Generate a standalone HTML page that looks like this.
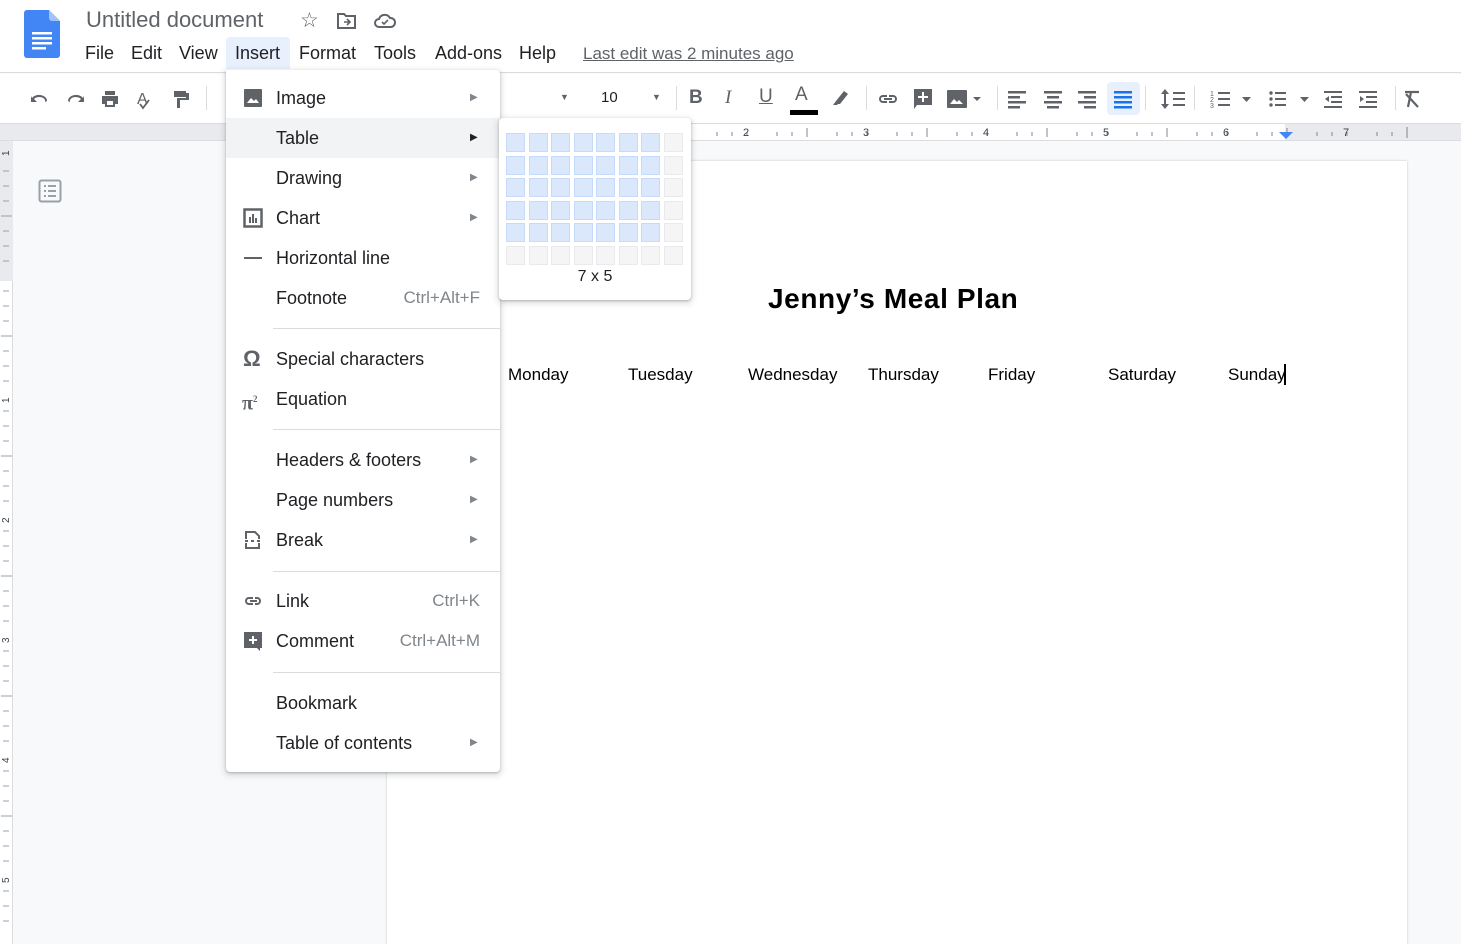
<!DOCTYPE html>
<html><head><meta charset="utf-8"><style>
*{margin:0;padding:0;box-sizing:border-box}
body{width:1461px;height:944px;overflow:hidden;background:#f8f9fa;font-family:"Liberation Sans",Arial,sans-serif;position:relative;color:#202124}
.a{position:absolute;white-space:nowrap}
.mi{position:absolute;left:0;width:274px;height:40px;font-size:18px;line-height:40px;color:#202124;white-space:nowrap}
.mi .t{position:absolute;left:50px}
.mi .k{position:absolute;right:20px;color:#80868b;font-size:17px}
.mi .ar{position:absolute;left:244px;top:0;color:#80868b;font-size:10px}
.mi .ic{position:absolute;left:17px;top:10px;width:20px;height:20px}
.sep{position:absolute;left:47px;width:227px;height:1px;background:#dadce0}
.cell{position:absolute;width:19px;height:19px;border:1px solid #c6dafc;background:#dbe7fb}
.cell.e{border-color:#e8eaed;background:#f5f5f5}
.day{position:absolute;top:365px;font-size:17px;color:#000;white-space:nowrap}
</style></head><body>
<div class="a" style="left:0;top:0;width:1461px;height:73px;background:#fff;border-bottom:1px solid #dadce0"></div>
<svg class="a" style="left:24px;top:10px" width="36" height="48" viewBox="0 0 36 48"><path d="M3 0h22l11 11v34a3 3 0 0 1-3 3H3a3 3 0 0 1-3-3V3a3 3 0 0 1 3-3z" fill="#4285f4"/><path d="M25 0l11 11H28a3 3 0 0 1-3-3z" fill="#a1c2fa"/><rect x="8" y="22" width="20" height="2.5" fill="#fff"/><rect x="8" y="27" width="20" height="2.5" fill="#fff"/><rect x="8" y="32" width="20" height="2.5" fill="#fff"/><rect x="8" y="37" width="14" height="2.5" fill="#fff"/></svg>
<div class="a" style="left:86px;top:7px;font-size:22px;color:#5f6368">Untitled document</div>
<div class="a" style="left:300px;top:8px;font-size:21px;color:#5f6368">☆</div>
<svg class="a" style="left:337px;top:12px" width="20" height="18" viewBox="0 0 20 18"><path d="M1 2h6l2 2h9v12H1z" fill="none" stroke="#5f6368" stroke-width="2"/><path d="M7 10h6M10 7l3 3-3 3" fill="none" stroke="#5f6368" stroke-width="1.6"/></svg>
<svg class="a" style="left:374px;top:12px" width="22" height="17" viewBox="0 0 22 17"><path d="M5 15a4 4 0 0 1 0-8 6 6 0 0 1 11-1 4.5 4.5 0 0 1 1 9z" fill="none" stroke="#5f6368" stroke-width="2"/><path d="M8 10l2 2 4-4" fill="none" stroke="#5f6368" stroke-width="1.6"/></svg>
<div class="a" style="left:226px;top:37px;width:64px;height:32px;background:#e8f0fe;border-radius:4px 4px 0 0"></div>
<div class="a" style="left:85px;top:43px;font-size:18px">
<span style="position:absolute;left:0">File</span><span style="position:absolute;left:46px">Edit</span><span style="position:absolute;left:94px">View</span><span style="position:absolute;left:150px">Insert</span><span style="position:absolute;left:214px">Format</span><span style="position:absolute;left:289px">Tools</span><span style="position:absolute;left:350px;white-space:nowrap">Add-ons</span><span style="position:absolute;left:434px">Help</span></div>
<div class="a" style="left:583px;top:44px;font-size:17px;color:#5f6368;text-decoration:underline">Last edit was 2 minutes ago</div>
<div class="a" style="left:0;top:74px;width:1461px;height:49px;background:#fff"></div>
<svg class="a" style="left:28px;top:88px" width="170" height="22" viewBox="0 0 170 22" fill="#5f6368">
<path d="M4 10a8 6 0 0 1 15 3l-2 1a6 4 0 0 0-11-3l3 3H3V8l1 2z"/>
<path d="M55 10a8 6 0 0 0-15 3l2 1a6 4 0 0 1 11-3l-3 3h6V8l-1 2z"/>
<path d="M77 3h10v4H77zM74 8h16v8h-3v3H77v-3h-3z"/><rect x="79" y="13" width="6" height="4" fill="#fff"/>
<text x="109" y="16" font-size="16" font-family="Liberation Sans">A</text><path d="M112 16l3 4 6-8" fill="none" stroke="#5f6368" stroke-width="1.8"/>
<path d="M146 3h12v6h-12zM158 5h3v7h-9v8h-3v-10h9z"/>
</svg>
<div class="a" style="left:206px;top:86px;width:1px;height:24px;background:#dadce0"></div>
<div class="a" style="left:560px;top:92px;font-size:9px;color:#5f6368">▼</div>
<div class="a" style="left:601px;top:89px;font-size:15px;color:#202124">10</div>
<div class="a" style="left:652px;top:92px;font-size:9px;color:#5f6368">▼</div>
<div class="a" style="left:676px;top:86px;width:1px;height:24px;background:#dadce0"></div>
<div class="a" style="left:689px;top:87px;font-size:19px;font-weight:bold;color:#5f6368">B</div>
<div class="a" style="left:725px;top:87px;font-size:19px;font-style:italic;font-family:'Liberation Serif';color:#5f6368">I</div>
<div class="a" style="left:759px;top:86px;font-size:19px;text-decoration:underline;color:#5f6368">U</div>
<div class="a" style="left:795px;top:84px;font-size:19px;color:#5f6368">A</div>
<div class="a" style="left:790px;top:110px;width:28px;height:5px;background:#000"></div>
<svg class="a" style="left:830px;top:88px" width="22" height="20" viewBox="0 0 22 20"><path d="M6 13l8-10 4 3-8 10H6z" fill="#5f6368"/><path d="M3 17l3-4 3 2-2 2z" fill="#5f6368"/></svg>
<div class="a" style="left:866px;top:86px;width:1px;height:24px;background:#dadce0"></div>
<svg class="a" style="left:876px;top:88px" width="120" height="22" viewBox="0 0 120 22" fill="#5f6368">
<path d="M7 7h4v2H7a2 2 0 0 0 0 4h4v2H7a4 4 0 0 1 0-8zM13 7h4a4 4 0 0 1 0 8h-4v-2h4a2 2 0 0 0 0-4h-4zM8 10h8v2H8z"/>
<path d="M38 1h18v16H41l-3 4z"/><rect x="46" y="4" width="2" height="10" fill="#fff"/><rect x="42" y="8" width="10" height="2" fill="#fff"/>
<rect x="71" y="2" width="20" height="18" rx="1"/><path d="M74 16l4-5 3 3 2-2 4 4z" fill="#fff"/><path d="M97 9h8l-4 4z"/>
</svg>
<div class="a" style="left:997px;top:86px;width:1px;height:24px;background:#dadce0"></div>
<div class="a" style="left:1107px;top:82px;width:33px;height:33px;background:#e8f0fe;border-radius:4px"></div>
<svg class="a" style="left:1005px;top:88px" width="420" height="22" viewBox="0 0 420 22">
<g fill="#5f6368"><path d="M3 3h18v2.5H3zM3 8h12v2.5H3zM3 13h18v2.5H3zM3 18h12v2.5H3z"/>
<path d="M39 3h18v2.5H39zM42 8h12v2.5H42zM39 13h18v2.5H39zM42 18h12v2.5H42z"/>
<path d="M73 3h18v2.5H73zM79 8h12v2.5H79zM73 13h18v2.5H73zM79 18h12v2.5H79z"/></g>
<g fill="#1a73e8"><path d="M109 3h18v2.5h-18zM109 8h18v2.5h-18zM109 13h18v2.5h-18zM109 18h18v2.5h-18z"/></g>
<g fill="#5f6368"><path d="M160 1l-4 5h3v10h-3l4 5 4-5h-3V6h3zM168 4h12v2h-12zM168 10h12v2h-12zM168 16h12v2h-12z"/>
<path d="M213 4h12v2h-12zM213 10h12v2h-12zM213 16h12v2h-12z"/><text x="205" y="8" font-size="7" font-family="Liberation Sans">1</text><text x="205" y="14" font-size="7" font-family="Liberation Sans">2</text><text x="205" y="20" font-size="7" font-family="Liberation Sans">3</text><path d="M237 9h9l-4.5 5z"/>
<circle cx="266" cy="5" r="1.7"/><circle cx="266" cy="11" r="1.7"/><circle cx="266" cy="17" r="1.7"/><path d="M270 4h11v2h-11zM270 10h11v2h-11zM270 16h11v2h-11z"/><path d="M295 9h9l-4.5 5z"/>
<path d="M319 3h18v2h-18zM326 8h11v2h-11zM326 13h11v2h-11zM319 18h18v2h-18zM324 8v6l-4-3z"/>
<path d="M354 3h18v2h-18zM361 8h11v2h-11zM361 13h11v2h-11zM354 18h18v2h-18zM355 8v6l4-3z"/></g>
<path d="M400 4h14M406 4l-3 15M401 6l12 13" stroke="#5f6368" stroke-width="2.2" fill="none"/>
</svg>
<div class="a" style="left:1145px;top:86px;width:1px;height:24px;background:#dadce0"></div>
<div class="a" style="left:1194px;top:86px;width:1px;height:24px;background:#dadce0"></div>
<div class="a" style="left:1395px;top:86px;width:1px;height:24px;background:#dadce0"></div>
<div class="a" style="left:0;top:123px;width:1461px;height:18px;background:#e8eaed;border-top:1px solid #dadce0;border-bottom:1px solid #dadce0"></div>
<div class="a" style="left:387px;top:124px;width:898px;height:16px;background:#fff"></div>
<svg class="a" style="left:387px;top:124px" width="1074" height="17">
<g stroke="#80868b" stroke-width="1">
<path d="M330 8v4M345 8v4M360 8v4M390 8v4M405 8v4M420 8v4M450 8v4M465 8v4M480 8v4M510 8v4M525 8v4M540 8v4M570 8v4M585 8v4M600 8v4M630 8v4M645 8v4M660 8v4M690 8v4M705 8v4M720 8v4M750 8v4M765 8v4M780 8v4M810 8v4M825 8v4M840 8v4M870 8v4M885 8v4M900 8v4M930 8v4M945 8v4M960 8v4M990 8v4M1005 8v4"/>
<path d="M420 4v9M540 4v9M660 4v9M780 4v9M900 4v9M1020 3v11"/></g>
<g font-size="11" fill="#3c4043" font-family="Liberation Sans"><text x="356" y="12">2</text><text x="476" y="12">3</text><text x="596" y="12">4</text><text x="716" y="12">5</text><text x="836" y="12">6</text><text x="956" y="12">7</text></g>
<path d="M892 8h14l-7 7z" fill="#4285f4"/>
</svg>
<div class="a" style="left:0;top:141px;width:13px;height:803px;background:#fff;border-right:1px solid #dadce0"></div>
<div class="a" style="left:0;top:141px;width:13px;height:140px;background:#e8eaed"></div>
<svg class="a" style="left:0;top:141px" width="13" height="803"><g stroke="#9aa0a6"><path d="M3 30h6M3 45h6M3 60h6M3 90h6M3 105h6M3 120h6M3 150h6M3 165h6M3 180h6M3 210h6M3 225h6M3 240h6M3 270h6M3 285h6M3 300h6M3 330h6M3 345h6M3 360h6M3 390h6M3 405h6M3 420h6M3 450h6M3 465h6M3 480h6M3 510h6M3 525h6M3 540h6M3 570h6M3 585h6M3 600h6M3 630h6M3 645h6M3 660h6M3 690h6M3 705h6M3 720h6M3 750h6M3 765h6M3 780h6"/><path d="M1 75h11M1 195h11M1 315h11M1 435h11M1 555h11M1 675h11"/></g>
<g font-size="10" fill="#3c4043" font-family="Liberation Sans"><text transform="translate(9,15) rotate(-90)">1</text><text transform="translate(9,262) rotate(-90)">1</text><text transform="translate(9,382) rotate(-90)">2</text><text transform="translate(9,502) rotate(-90)">3</text><text transform="translate(9,622) rotate(-90)">4</text><text transform="translate(9,742) rotate(-90)">5</text></g></svg>
<svg class="a" style="left:38px;top:179px" width="24" height="24" viewBox="0 0 24 24"><rect x="1.5" y="1.5" width="21" height="21" rx="2" fill="none" stroke="#9aa0a6" stroke-width="2"/><path d="M6 7h2M10 7h8M6 12h2M10 12h8M6 17h2M10 17h8" stroke="#9aa0a6" stroke-width="2"/></svg>
<div class="a" style="left:387px;top:161px;width:1020px;height:783px;background:#fff;box-shadow:0 0 2px rgba(60,64,67,.3)"></div>
<div class="a" style="left:768px;top:283px;font-size:28px;font-weight:bold;color:#000;letter-spacing:0.6px">Jenny’s Meal Plan</div>
<div class="day" style="left:508px">Monday</div>
<div class="day" style="left:628px">Tuesday</div>
<div class="day" style="left:748px">Wednesday</div>
<div class="day" style="left:868px">Thursday</div>
<div class="day" style="left:988px">Friday</div>
<div class="day" style="left:1108px">Saturday</div>
<div class="day" style="left:1228px">Sunday</div>
<div class="a" style="left:1284px;top:364px;width:2px;height:21px;background:#000"></div>
<div class="a" style="left:226px;top:70px;width:274px;height:702px;background:#fff;border-radius:0 4px 4px 4px;box-shadow:0 2px 6px 2px rgba(60,64,67,.15),0 1px 2px rgba(60,64,67,.3)">
<div class="mi" style="top:8px"><svg class="ic" viewBox="0 0 20 20"><rect x="1" y="1" width="18" height="18" rx="1" fill="#5f6368"/><path d="M4 15l4-5 3 3 2-2 3 4z" fill="#fff"/></svg><span class="t">Image</span><span class="ar">▶</span></div>
<div class="mi" style="top:48px;background:#f1f3f4"><span class="t">Table</span><span class="ar" style="color:#202124">▶</span></div>
<div class="mi" style="top:88px"><span class="t">Drawing</span><span class="ar">▶</span></div>
<div class="mi" style="top:128px"><svg class="ic" viewBox="0 0 20 20"><rect x="1.5" y="1.5" width="17" height="17" fill="none" stroke="#5f6368" stroke-width="2.5"/><path d="M6 9h2v6H6zM9 6h2v9H9zM12 10h2v5h-2z" fill="#5f6368"/></svg><span class="t">Chart</span><span class="ar">▶</span></div>
<div class="mi" style="top:168px"><svg class="ic" viewBox="0 0 20 20"><rect x="1" y="9" width="18" height="2" fill="#5f6368"/></svg><span class="t">Horizontal line</span></div>
<div class="mi" style="top:208px"><span class="t">Footnote</span><span class="k">Ctrl+Alt+F</span></div>
<div class="sep" style="top:258px"></div>
<div class="mi" style="top:269px"><span class="ic" style="top:0;left:17px;font-size:22px;color:#5f6368;font-weight:bold">Ω</span><span class="t">Special characters</span></div>
<div class="mi" style="top:309px"><span class="ic" style="top:0;left:16px;font-size:20px;color:#5f6368;font-weight:bold;font-family:'Liberation Serif'">π<sup style="font-size:9px">2</sup></span><span class="t">Equation</span></div>
<div class="sep" style="top:359px"></div>
<div class="mi" style="top:370px"><span class="t">Headers &amp; footers</span><span class="ar">▶</span></div>
<div class="mi" style="top:410px"><span class="t">Page numbers</span><span class="ar">▶</span></div>
<div class="mi" style="top:450px"><svg class="ic" viewBox="0 0 20 20"><path d="M3 9V2h9l4 4v3M3 13v5h13v-5" fill="none" stroke="#5f6368" stroke-width="2"/><path d="M2 11h3M8 11h3M14 11h3" stroke="#5f6368" stroke-width="2"/></svg><span class="t">Break</span><span class="ar">▶</span></div>
<div class="sep" style="top:501px"></div>
<div class="mi" style="top:511px"><svg class="ic" viewBox="0 0 20 20"><path d="M6 6h4v2H6a2 2 0 0 0 0 4h4v2H6a4 4 0 0 1 0-8zM12 6h2a4 4 0 0 1 0 8h-2v-2h2a2 2 0 0 0 0-4h-2zM7 9h7v2H7z" fill="#5f6368"/></svg><span class="t">Link</span><span class="k">Ctrl+K</span></div>
<div class="mi" style="top:551px"><svg class="ic" viewBox="0 0 20 20"><path d="M1 1h18v16h-2v3l-3-3H1z" fill="#5f6368"/><path d="M9 5h2v3h3v2h-3v3H9v-3H6V8h3z" fill="#fff"/></svg><span class="t">Comment</span><span class="k">Ctrl+Alt+M</span></div>
<div class="sep" style="top:602px"></div>
<div class="mi" style="top:613px"><span class="t">Bookmark</span></div>
<div class="mi" style="top:653px"><span class="t">Table of contents</span><span class="ar">▶</span></div>
</div>
<div class="a" style="left:499px;top:118px;width:192px;height:182px;background:#fff;border-radius:4px;box-shadow:0 2px 6px 2px rgba(60,64,67,.15),0 1px 2px rgba(60,64,67,.3)">
<div class="a" style="left:0;top:150px;width:192px;text-align:center;font-size:16px;color:#202124">7 x 5</div>
</div>
<div class="a" style="left:506px;top:133px">
<div class="cell" style="left:0;top:0"></div><div class="cell" style="left:22.5px;top:0"></div><div class="cell" style="left:45px;top:0"></div><div class="cell" style="left:67.5px;top:0"></div><div class="cell" style="left:90px;top:0"></div><div class="cell" style="left:112.5px;top:0"></div><div class="cell" style="left:135px;top:0"></div><div class="cell e" style="left:157.5px;top:0"></div>
<div class="cell" style="left:0;top:22.5px"></div><div class="cell" style="left:22.5px;top:22.5px"></div><div class="cell" style="left:45px;top:22.5px"></div><div class="cell" style="left:67.5px;top:22.5px"></div><div class="cell" style="left:90px;top:22.5px"></div><div class="cell" style="left:112.5px;top:22.5px"></div><div class="cell" style="left:135px;top:22.5px"></div><div class="cell e" style="left:157.5px;top:22.5px"></div>
<div class="cell" style="left:0;top:45px"></div><div class="cell" style="left:22.5px;top:45px"></div><div class="cell" style="left:45px;top:45px"></div><div class="cell" style="left:67.5px;top:45px"></div><div class="cell" style="left:90px;top:45px"></div><div class="cell" style="left:112.5px;top:45px"></div><div class="cell" style="left:135px;top:45px"></div><div class="cell e" style="left:157.5px;top:45px"></div>
<div class="cell" style="left:0;top:67.5px"></div><div class="cell" style="left:22.5px;top:67.5px"></div><div class="cell" style="left:45px;top:67.5px"></div><div class="cell" style="left:67.5px;top:67.5px"></div><div class="cell" style="left:90px;top:67.5px"></div><div class="cell" style="left:112.5px;top:67.5px"></div><div class="cell" style="left:135px;top:67.5px"></div><div class="cell e" style="left:157.5px;top:67.5px"></div>
<div class="cell" style="left:0;top:90px"></div><div class="cell" style="left:22.5px;top:90px"></div><div class="cell" style="left:45px;top:90px"></div><div class="cell" style="left:67.5px;top:90px"></div><div class="cell" style="left:90px;top:90px"></div><div class="cell" style="left:112.5px;top:90px"></div><div class="cell" style="left:135px;top:90px"></div><div class="cell e" style="left:157.5px;top:90px"></div>
<div class="cell e" style="left:0;top:112.5px"></div><div class="cell e" style="left:22.5px;top:112.5px"></div><div class="cell e" style="left:45px;top:112.5px"></div><div class="cell e" style="left:67.5px;top:112.5px"></div><div class="cell e" style="left:90px;top:112.5px"></div><div class="cell e" style="left:112.5px;top:112.5px"></div><div class="cell e" style="left:135px;top:112.5px"></div><div class="cell e" style="left:157.5px;top:112.5px"></div>
</div>
</body></html>
